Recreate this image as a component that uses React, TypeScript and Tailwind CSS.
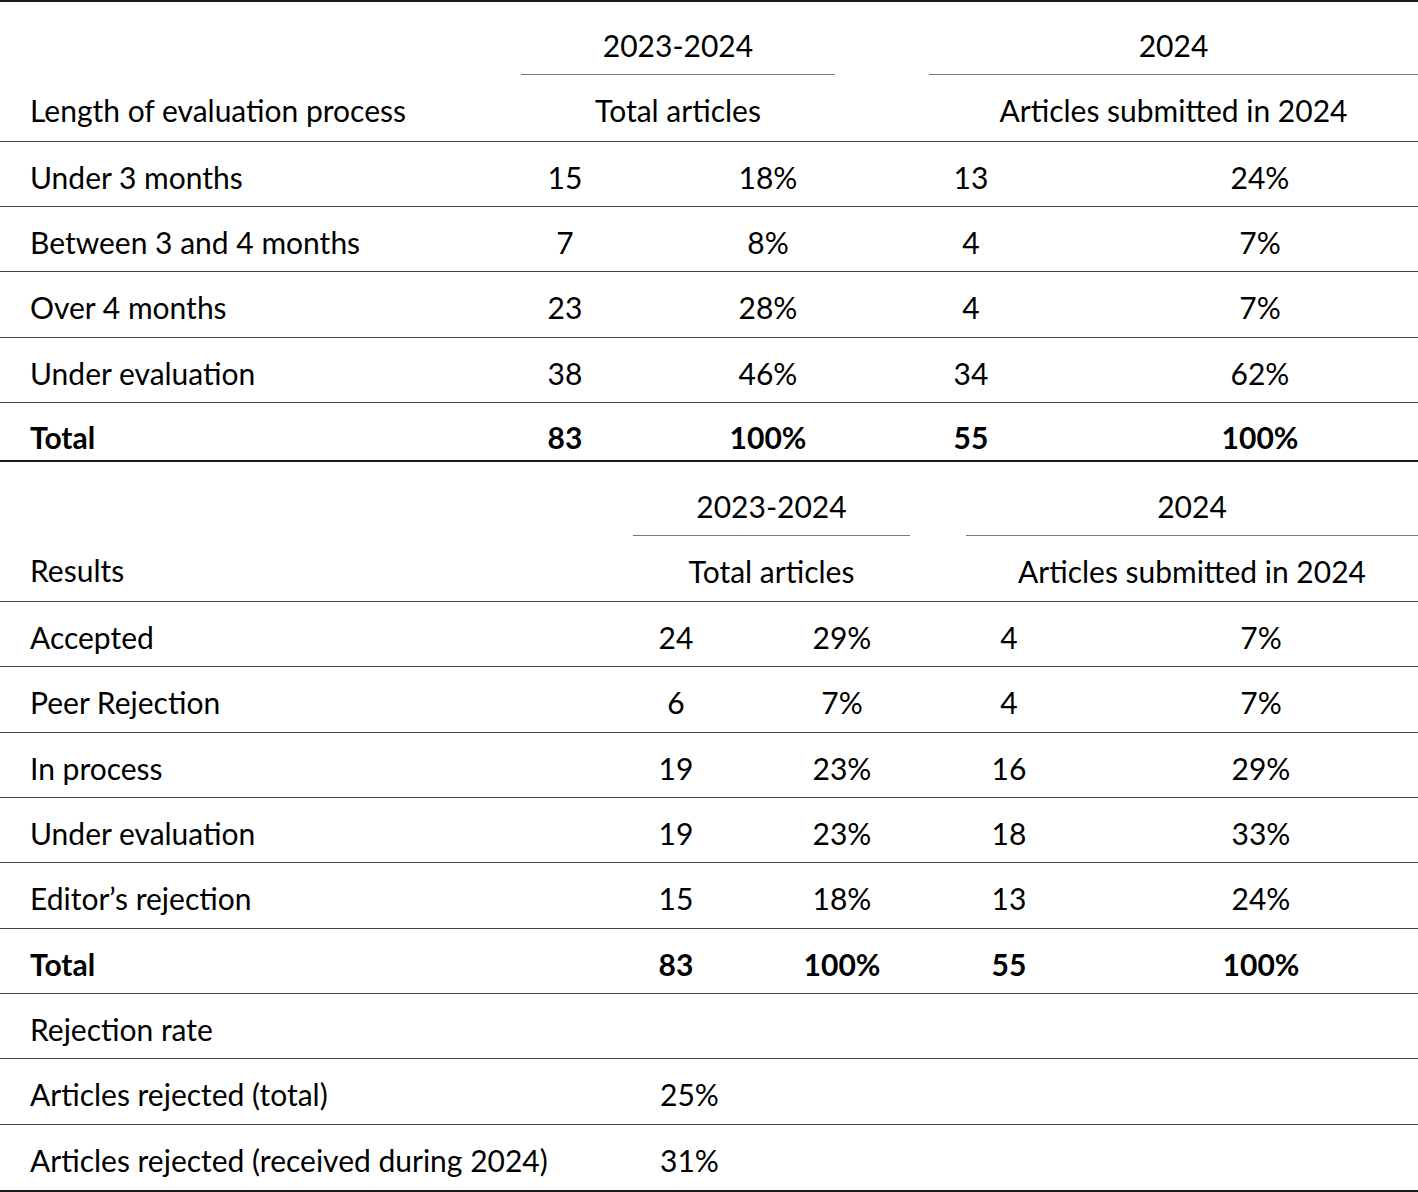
const font = { fontFamily: "Lato, 'Open Sans', sans-serif" };

type Row = { label: string; v: string[]; bold?: boolean; h: string };

const lengthRows: Row[] = [
  { label: "Under 3 months", v: ["15", "18%", "13", "24%"], h: "h-[65px]" },
  { label: "Between 3 and 4 months", v: ["7", "8%", "4", "7%"], h: "h-[65px]" },
  { label: "Over 4 months", v: ["23", "28%", "4", "7%"], h: "h-[66px]" },
  { label: "Under evaluation", v: ["38", "46%", "34", "62%"], h: "h-[65px]" },
];

const resultRows: Row[] = [
  { label: "Accepted", v: ["24", "29%", "4", "7%"], h: "h-[65px]" },
  { label: "Peer Rejection", v: ["6", "7%", "4", "7%"], h: "h-[66px]" },
  { label: "In process", v: ["19", "23%", "16", "29%"], h: "h-[65px]" },
  { label: "Under evaluation", v: ["19", "23%", "18", "33%"], h: "h-[65px]" },
  { label: "Editor’s rejection", v: ["15", "18%", "13", "24%"], h: "h-[66px]" },
  { label: "Total", v: ["83", "100%", "55", "100%"], bold: true, h: "h-[65px]" },
];

function FirstTable() {
  return (
    <div className="border-t-2 border-[#1a1a1a]">
      {/* group headers */}
      <div className="flex h-[72px] items-end pb-[14px]">
        <div className="w-[510px]" />
        <div className="w-[406px] pl-[11px] pr-[81px]">
          <div className="text-center">2023-2024</div>
        </div>
        <div className="flex-1 pl-[13px]">
          <div className="text-center">2024</div>
        </div>
      </div>
      <div className="flex h-[68px] items-center border-b border-[#444]">
        <div className="w-[510px] pl-[30px] pt-[4px]">Length of evaluation process</div>
        <div className="w-[406px] self-stretch pl-[11px] pr-[81px]">
          <div className="flex h-full items-center justify-center border-t border-[#7a7a7a] pt-[4px]">Total articles</div>
        </div>
        <div className="flex-1 self-stretch pl-[13px]">
          <div className="flex h-full items-center justify-center border-t border-[#7a7a7a] pt-[4px]">Articles submitted in 2024</div>
        </div>
      </div>
      {lengthRows.map((r) => (
        <div key={r.label} className={`flex items-center border-b border-[#444] pt-[5px] ${r.h}`}>
          <div className="w-[510px] pl-[30px]">{r.label}</div>
          <div className="w-[110px] text-center">{r.v[0]}</div>
          <div className="w-[296px] text-center">{r.v[1]}</div>
          <div className="w-[110px] text-center">{r.v[2]}</div>
          <div className="flex-1 pl-[76px] text-center">{r.v[3]}</div>
        </div>
      ))}
      <div className="flex h-[59px] items-center border-b-2 border-[#1a1a1a] pt-[10px] font-bold">
        <div className="w-[510px] pl-[30px]">Total</div>
        <div className="w-[110px] text-center">83</div>
        <div className="w-[296px] text-center">100%</div>
        <div className="w-[110px] text-center">55</div>
        <div className="flex-1 pl-[76px] text-center">100%</div>
      </div>
    </div>
  );
}

function SecondTable() {
  return (
    <div className="border-b-2 border-[#1a1a1a]">
      <div className="flex h-[73px] items-end pb-[14px]">
        <div className="w-[620px]" />
        <div className="w-[332px] pl-[13px] pr-[42px]">
          <div className="text-center">2023-2024</div>
        </div>
        <div className="flex-1 pl-[14px]">
          <div className="text-center">2024</div>
        </div>
      </div>
      <div className="flex h-[67px] items-center border-b border-[#444]">
        <div className="w-[620px] pl-[30px] pt-[4px]">Results</div>
        <div className="w-[332px] self-stretch pl-[13px] pr-[42px]">
          <div className="flex h-full items-center justify-center border-t border-[#7a7a7a] pt-[4px]">Total articles</div>
        </div>
        <div className="flex-1 self-stretch pl-[14px]">
          <div className="flex h-full items-center justify-center border-t border-[#7a7a7a] pt-[4px]">Articles submitted in 2024</div>
        </div>
      </div>
      {resultRows.map((r) => (
        <div key={r.label} className={`flex items-center border-b border-[#444] pt-[5px] ${r.h} ${r.bold ? "font-bold" : ""}`}>
          <div className="w-[620px] pl-[30px]">{r.label}</div>
          <div className="w-[112px] text-center">{r.v[0]}</div>
          <div className="w-[220px] text-center">{r.v[1]}</div>
          <div className="w-[114px] text-center">{r.v[2]}</div>
          <div className="flex-1 pl-[38px] text-center">{r.v[3]}</div>
        </div>
      ))}
      <div className="flex h-[65px] items-center border-b border-[#444] pt-[5px]">
        <div className="pl-[30px]">Rejection rate</div>
      </div>
      <div className="flex h-[66px] items-center border-b border-[#444] pt-[5px]">
        <div className="w-[620px] pl-[30px]">Articles rejected (total)</div>
        <div className="pl-[40px]">25%</div>
      </div>
      <div className="flex h-[65px] items-center pt-[5px]">
        <div className="w-[620px] pl-[30px]">Articles rejected (received during 2024)</div>
        <div className="pl-[40px]">31%</div>
      </div>
    </div>
  );
}

export default function App() {
  return (
    <div className="w-[1418px] bg-white text-[30px] leading-none text-black" style={font}>
      <FirstTable />
      <SecondTable />
    </div>
  );
}
